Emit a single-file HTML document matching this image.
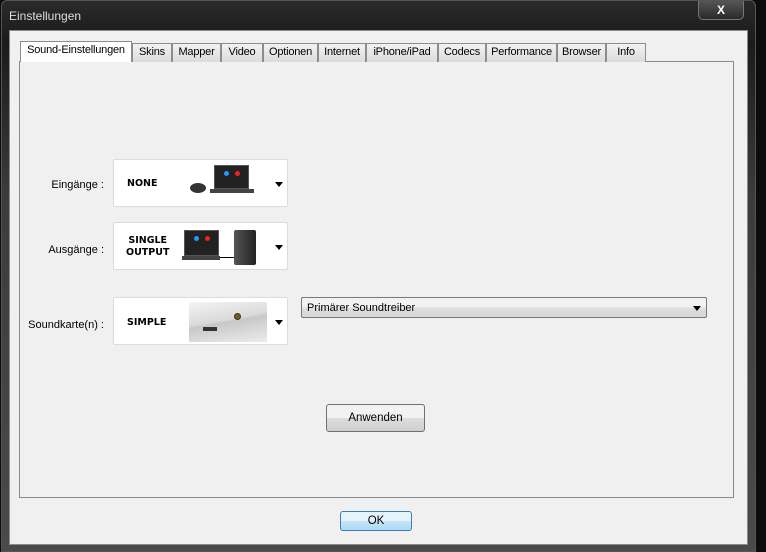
<!DOCTYPE html>
<html><head><meta charset="utf-8"><style>
*{margin:0;padding:0;box-sizing:border-box}
body{width:766px;height:552px;overflow:hidden;background:#0c0c0c;font-family:"Liberation Sans",sans-serif;font-size:11px;color:#000;position:relative}
.win{position:absolute;left:1px;top:0;width:755px;height:552px;border:1px solid #555;border-radius:6px 6px 0 0;background:linear-gradient(#2a2a2a,#1b1b1b 40px,#3c3c3c 200px,#4a4a4a);}
.title{position:absolute;left:9px;top:9px;color:#ddd;font-size:12px}
.xbtn{position:absolute;left:698px;top:1px;width:46px;height:19px;border:1px solid #777;border-top:none;border-radius:0 0 5px 5px;background:linear-gradient(#555,#2a2a2a);color:#fff;font-weight:bold;text-align:center;font-size:12px;line-height:18px}
.client{position:absolute;left:9px;top:30px;width:739px;height:515px;background:#f0f0f0;border:1px solid #8a8a8a}
.panel{position:absolute;left:19px;top:61px;width:715px;height:437px;border:1px solid #898c95;background:#f0f0f0}
.tab{position:absolute;top:43px;height:19px;border:1px solid #898c95;border-bottom:none;background:linear-gradient(#f2f2f2,#dcdcdc);text-align:center;line-height:17px;font-size:11px;letter-spacing:-0.2px}
.tab.sel{top:41px;height:21px;background:#fff;z-index:2}
.lbl{position:absolute;font-size:11px;text-align:right;width:90px}
.dd{position:absolute;left:113px;width:175px;height:48px;background:#fff;border:1px solid #dcdcdc;border-radius:2px}
.dd b{position:absolute;font-family:"DejaVu Sans",sans-serif;font-size:9.5px;font-weight:900;text-align:center;line-height:12px}
.arr{position:absolute;right:4px;top:22px;width:0;height:0;border-left:4px solid transparent;border-right:4px solid transparent;border-top:5px solid #000}
.btn{position:absolute;border:1px solid #707070;border-radius:3px;background:linear-gradient(#f2f2f2 50%,#dddddd 50%,#cfcfcf);text-align:center;font-size:11.5px}
</style></head><body>
<div class="win"></div>
<div class="title">Einstellungen</div>
<div class="xbtn">X</div>
<div class="client"></div>
<div class="panel"></div>
<div class="tab sel" style="left:20px;width:112px">Sound-Einstellungen</div>
<div class="tab" style="left:132px;width:40px">Skins</div>
<div class="tab" style="left:172px;width:49px">Mapper</div>
<div class="tab" style="left:221px;width:42px">Video</div>
<div class="tab" style="left:263px;width:55px">Optionen</div>
<div class="tab" style="left:318px;width:48px">Internet</div>
<div class="tab" style="left:366px;width:72px">iPhone/iPad</div>
<div class="tab" style="left:438px;width:48px">Codecs</div>
<div class="tab" style="left:486px;width:71px">Performance</div>
<div class="tab" style="left:557px;width:49px">Browser</div>
<div class="tab" style="left:606px;width:40px">Info</div>

<div class="lbl" style="left:14px;top:179px">Eingänge :</div>
<div class="lbl" style="left:14px;top:244px">Ausgänge :</div>
<div class="lbl" style="left:14px;top:319px">Soundkarte(n) :</div>

<div class="dd" style="top:159px"><b style="left:13px;top:18px">NONE</b>
<div style="position:absolute;left:100px;top:5px;width:35px;height:24px;background:#222;border:1px solid #555"><div style="position:absolute;left:9px;top:5px;width:5px;height:5px;border-radius:50%;background:#29f"></div><div style="position:absolute;left:20px;top:5px;width:5px;height:5px;border-radius:50%;background:#e22"></div></div>
<div style="position:absolute;left:96px;top:29px;width:44px;height:4px;background:#444"></div>
<div style="position:absolute;left:76px;top:23px;width:16px;height:10px;border-radius:50%;background:#333"></div>
<div class="arr"></div></div>

<div class="dd" style="top:222px"><b style="left:12px;top:12px">SINGLE<br>OUTPUT</b>
<div style="position:absolute;left:70px;top:7px;width:35px;height:26px;background:#222;border:1px solid #555"><div style="position:absolute;left:9px;top:5px;width:5px;height:5px;border-radius:50%;background:#29f"></div><div style="position:absolute;left:20px;top:5px;width:5px;height:5px;border-radius:50%;background:#e22"></div></div>
<div style="position:absolute;left:68px;top:33px;width:38px;height:4px;background:#444"></div>
<div style="position:absolute;left:106px;top:34px;width:15px;height:1px;background:#000"></div>
<div style="position:absolute;left:120px;top:7px;width:22px;height:35px;background:linear-gradient(90deg,#555,#222);border-radius:2px"></div>
<div class="arr"></div></div>

<div class="dd" style="top:297px"><b style="left:13px;top:19px">SIMPLE</b>
<div style="position:absolute;left:75px;top:4px;width:78px;height:40px;background:linear-gradient(170deg,#f4f4f4,#dadada 45%,#c8c8c8 50%,#ececec)"><div style="position:absolute;left:45px;top:11px;width:7px;height:7px;border-radius:50%;background:#7a5a20;border:1px solid #333"></div><div style="position:absolute;left:14px;top:25px;width:14px;height:4px;background:#333"></div></div>
<div class="arr"></div></div>

<div style="position:absolute;left:301px;top:297px;width:406px;height:21px;border:1px solid #7a7a7a;border-radius:2px;background:linear-gradient(#f2f2f2 50%,#e0e0e0 50%,#d5d5d5);padding:4px 0 0 5px;font-size:11px">Primärer Soundtreiber
<div style="position:absolute;right:5px;top:8px;border-left:4px solid transparent;border-right:4px solid transparent;border-top:5px solid #000"></div></div>

<div class="btn" style="left:326px;top:404px;width:99px;height:28px;line-height:26px">Anwenden</div>
<div class="btn" style="left:340px;top:511px;width:72px;height:20px;line-height:18px;border-color:#3c7fb1;background:linear-gradient(#e5f4fc 50%,#c4e5f6 50%,#a9daf5)">OK</div>
</body></html>
